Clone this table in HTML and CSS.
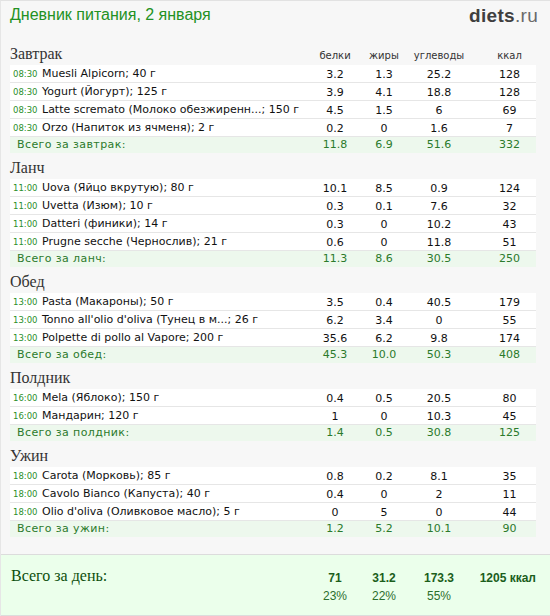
FILE: index.html
```html
<!DOCTYPE html>
<html lang="ru">
<head>
<meta charset="utf-8">
<title>Дневник питания</title>
<link rel="stylesheet" href="styles.css">
</head>
<body>
<div class="page">
  <header class="top">
    <h1 class="title">Дневник питания, 2 января</h1>
    <div class="logo"><b>diets</b>.ru</div>
  </header>

  <div class="diary">
    <section class="meal">
      <div class="meal-head">
        <h2>Завтрак</h2>
        <span class="lbl">белки</span><span class="lbl">жиры</span><span class="lbl">углеводы</span><span class="lbl k">ккал</span>
      </div>
      <div class="row"><span class="name"><span class="time">08:30</span>Muesli Alpicorn; 40 г</span><span>3.2</span><span>1.3</span><span>25.2</span><span class="k">128</span></div>
      <div class="row"><span class="name"><span class="time">08:30</span>Yogurt (Йогурт); 125 г</span><span>3.9</span><span>4.1</span><span>18.8</span><span class="k">128</span></div>
      <div class="row"><span class="name"><span class="time">08:30</span>Latte scremato (Молоко обезжиренн...; 150 г</span><span>4.5</span><span>1.5</span><span>6</span><span class="k">69</span></div>
      <div class="row"><span class="name"><span class="time">08:30</span>Orzo (Напиток из ячменя); 2 г</span><span>0.2</span><span>0</span><span>1.6</span><span class="k">7</span></div>
      <div class="row total"><span class="name">Всего за завтрак:</span><span>11.8</span><span>6.9</span><span>51.6</span><span class="k">332</span></div>
    </section>

    <section class="meal">
      <div class="meal-head"><h2>Ланч</h2></div>
      <div class="row"><span class="name"><span class="time">11:00</span>Uova (Яйцо вкрутую); 80 г</span><span>10.1</span><span>8.5</span><span>0.9</span><span class="k">124</span></div>
      <div class="row"><span class="name"><span class="time">11:00</span>Uvetta (Изюм); 10 г</span><span>0.3</span><span>0.1</span><span>7.6</span><span class="k">32</span></div>
      <div class="row"><span class="name"><span class="time">11:00</span>Datteri (финики); 14 г</span><span>0.3</span><span>0</span><span>10.2</span><span class="k">43</span></div>
      <div class="row"><span class="name"><span class="time">11:00</span>Prugne secche (Чернослив); 21 г</span><span>0.6</span><span>0</span><span>11.8</span><span class="k">51</span></div>
      <div class="row total"><span class="name">Всего за ланч:</span><span>11.3</span><span>8.6</span><span>30.5</span><span class="k">250</span></div>
    </section>

    <section class="meal">
      <div class="meal-head"><h2>Обед</h2></div>
      <div class="row"><span class="name"><span class="time">13:00</span>Pasta (Макароны); 50 г</span><span>3.5</span><span>0.4</span><span>40.5</span><span class="k">179</span></div>
      <div class="row"><span class="name"><span class="time">13:00</span>Tonno all'olio d'oliva (Тунец в м...; 26 г</span><span>6.2</span><span>3.4</span><span>0</span><span class="k">55</span></div>
      <div class="row"><span class="name"><span class="time">13:00</span>Polpette di pollo al Vapore; 200 г</span><span>35.6</span><span>6.2</span><span>9.8</span><span class="k">174</span></div>
      <div class="row total"><span class="name">Всего за обед:</span><span>45.3</span><span>10.0</span><span>50.3</span><span class="k">408</span></div>
    </section>

    <section class="meal">
      <div class="meal-head"><h2>Полдник</h2></div>
      <div class="row"><span class="name"><span class="time">16:00</span>Mela (Яблоко); 150 г</span><span>0.4</span><span>0.5</span><span>20.5</span><span class="k">80</span></div>
      <div class="row"><span class="name"><span class="time">16:00</span>Мандарин; 120 г</span><span>1</span><span>0</span><span>10.3</span><span class="k">45</span></div>
      <div class="row total"><span class="name">Всего за полдник:</span><span>1.4</span><span>0.5</span><span>30.8</span><span class="k">125</span></div>
    </section>

    <section class="meal">
      <div class="meal-head"><h2>Ужин</h2></div>
      <div class="row"><span class="name"><span class="time">18:00</span>Carota (Морковь); 85 г</span><span>0.8</span><span>0.2</span><span>8.1</span><span class="k">35</span></div>
      <div class="row"><span class="name"><span class="time">18:00</span>Cavolo Bianco (Капуста); 40 г</span><span>0.4</span><span>0</span><span>2</span><span class="k">11</span></div>
      <div class="row"><span class="name"><span class="time">18:00</span>Olio d'oliva (Оливковое масло); 5 г</span><span>0</span><span>5</span><span>0</span><span class="k">44</span></div>
      <div class="row total"><span class="name">Всего за ужин:</span><span>1.2</span><span>5.2</span><span>10.1</span><span class="k">90</span></div>
    </section>
  </div>

  <footer class="day">
    <div class="day-label">Всего за день:</div>
    <span class="v c2">71</span><span class="v c3">31.2</span><span class="v c4">173.3</span><span class="v c5 kc">1205 ккал</span>
    <span class="p c2">23%</span><span class="p c3">22%</span><span class="p c4">55%</span>
  </footer>
</div>
</body>
</html>
```

FILE: styles.css
```css
* { box-sizing: border-box; }

html, body {
  margin: 0;
  padding: 0;
  background: #f7f7f7;
}

.page {
  width: 550px;
  height: 616px;
  border-top: 1px solid #e2e2e2;
  border-left: 1px solid #e6e6e6;
  background: #f7f7f7;
  font-family: "DejaVu Sans", Verdana, sans-serif;
  overflow: hidden;
}

.top {
  height: 38px;
  display: flex;
  justify-content: space-between;
  align-items: flex-start;
  padding: 5px 12px 0 9px;
}

.title {
  margin: 0;
  font-family: "Liberation Sans", Arial, sans-serif;
  font-weight: normal;
  font-size: 16px;
  line-height: 18px;
  color: #239123;
}

.logo {
  font-family: "Liberation Sans", Arial, sans-serif;
  font-size: 19px;
  line-height: 20px;
  color: #6a6a6a;
  letter-spacing: 0.3px;
}
.logo b { color: #3f3f3f; }

.diary {
  padding-left: 9px;
}

.meal-head,
.row,
.day {
  display: grid;
  grid-template-columns: 300px 50px 48px 62px 66px;
  align-items: center;
}

.meal-head {
  height: 26px;
  align-items: end;
  padding-bottom: 2px;
}

.meal-head h2 {
  margin: 0;
  font-family: "Liberation Serif", Georgia, serif;
  font-weight: normal;
  font-size: 16px;
  line-height: 18px;
  color: #333;
}

.lbl {
  font-size: 10px;
  line-height: 14px;
  color: #333;
  text-align: center;
  align-self: end;
}

.row {
  width: 526px;
  height: 18px;
  background: #fff;
  border-bottom: 1px solid #e6e6e6;
  font-size: 11px;
  line-height: 17px;
  color: #111;
  text-align: center;
}

.row .name {
  text-align: left;
  white-space: nowrap;
  overflow: visible;
  padding-left: 3px;
}

.k { padding-left: 13px; }

.time {
  display: inline-block;
  width: 29px;
  font-size: 8.5px;
  color: #2a8f2a;
}

.row.total {
  height: 16px;
  border-bottom: none;
  background: #edf8ed;
  color: #2b7a2b;
  line-height: 16px;
}
.row.total .name {
  padding-left: 7px;
  letter-spacing: 0.4px;
}

.day {
  margin-top: 17px;
  height: 62px;
  width: 549px;
  border-top: 1px solid #dcdcdc;
  border-bottom: 1px solid #dcdcdc;
  background: #ebffeb;
  padding: 12px 0 0 9px;
  grid-template-rows: 18px 18px;
  align-content: start;
}

.day-label {
  grid-row: 1;
  grid-column: 1;
  padding-left: 1px;
  font-family: "Liberation Serif", Georgia, serif;
  font-size: 16px;
  line-height: 18px;
  color: #0d4f0d;
}

.c2 { grid-column: 2; }
.c3 { grid-column: 3; }
.c4 { grid-column: 4; }
.c5 { grid-column: 5; }

.v {
  grid-row: 1;
  font-family: "Liberation Sans", Arial, sans-serif;
  font-weight: bold;
  font-size: 12px;
  color: #1b5e1b;
  text-align: center;
  padding-top: 3px;
}
.v.kc { text-align: right; }

.p {
  grid-row: 2;
  font-family: "Liberation Sans", Arial, sans-serif;
  font-size: 12px;
  color: #2b6e2b;
  text-align: center;
  padding-top: 4px;
}
```
